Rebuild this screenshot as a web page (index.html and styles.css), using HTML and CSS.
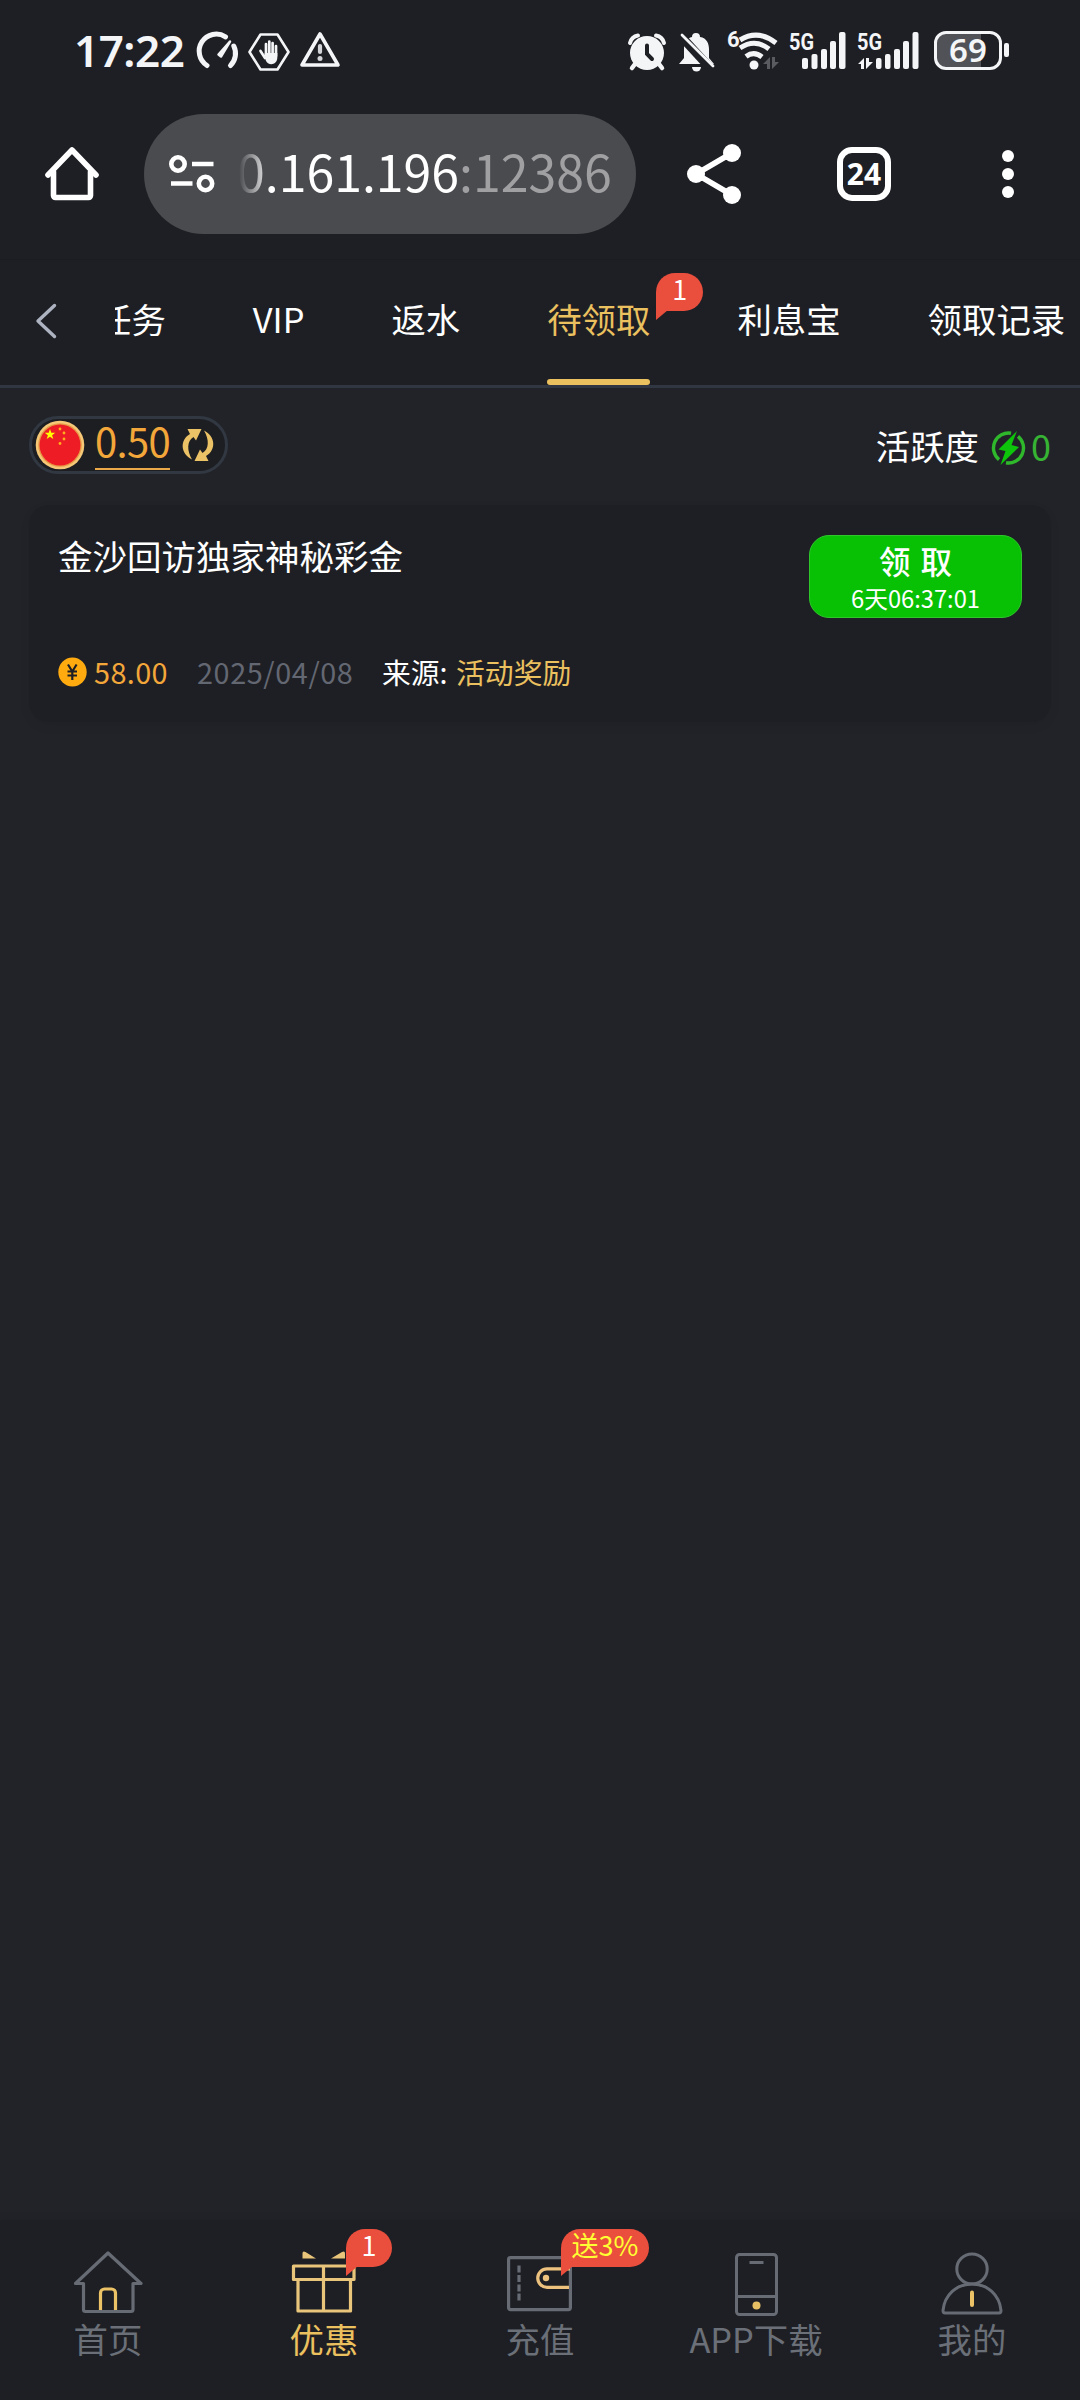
FILE: index.html
```html
<!DOCTYPE html>
<html lang="zh-CN">
<head>
<meta charset="utf-8">
<title>待领取</title>
<link rel="stylesheet" href="styles.css">
</head>
<body>
<div class="screen">
  <div class="status">
    <span class="clock">17:22</span>
    <svg class="s-gauge" width="40" height="36" viewBox="0 0 40 36" fill="none" stroke="#f4f5f7" stroke-width="5" stroke-linecap="round"><path d="M8 32.500A17 17 0 0 1 26.500 3.800M34.800 13A17 17 0 0 1 31.500 32.500"/><path d="M19.500 21.500L31 8.500L22 23.500Z" fill="#f4f5f7" stroke-width="2.500" stroke-linejoin="round"/></svg>
    <svg class="s-hex" width="42" height="38" viewBox="0 0 42 38"><path d="M12.500 1.500h17L40.500 19l-11 17.500h-17L1.500 19z" fill="none" stroke="#f4f5f7" stroke-width="2.600" stroke-linejoin="round"/><path d="M12.500 18L17 25M18 22V11M21.300 22V8.500M24.600 22V10M28 23V13" fill="none" stroke="#f4f5f7" stroke-width="2.700" stroke-linecap="round"/><path d="M16.600 20h12.700v4.500c0 8-9.500 8.500-11.500 3z" fill="#f4f5f7"/></svg>
    <svg class="s-warn" width="42" height="38" viewBox="0 0 42 38"><path d="M21 4L39 35H3Z" fill="none" stroke="#f4f5f7" stroke-width="3.600" stroke-linejoin="round"/><path d="M21 16v6" stroke="#d4d5d8" stroke-width="4.200" stroke-linecap="round"/><circle cx="21" cy="28.500" r="2.500" fill="#d4d5d8"/></svg>
    <svg class="s-alarm" width="38" height="38" viewBox="0 0 38 38"><path d="M2 10A10 10 0 0 1 10 2.500M28 2.500A10 10 0 0 1 36 10" fill="none" stroke="#f4f5f7" stroke-width="4" stroke-linecap="round"/><circle cx="19" cy="20" r="17" fill="#f4f5f7"/><path d="M7 31l-3 4M31 31l3 4" stroke="#f4f5f7" stroke-width="4.500" stroke-linecap="round"/><path d="M19 12.500v8.500l5 5" fill="none" stroke="#1e1f24" stroke-width="4" stroke-linecap="round"/></svg>
    <svg class="s-bell" width="38" height="42" viewBox="0 0 38 42"><path d="M14 6q0-4 4-4t4 4c7 1 9 7 9 12v9l5 6H1l5-6V17c0-5 3-10 8-11z" fill="#f4f5f7"/><path d="M14 36h9a4.500 4.500 0 0 1-9 0z" fill="#f4f5f7"/><path d="M0 2L33 38" stroke="#1e1f24" stroke-width="9"/><path d="M4 4L35 35" stroke="#f4f5f7" stroke-width="2.800" stroke-linecap="round"/></svg>
    <svg class="s-wifi" width="54" height="42" viewBox="0 0 54 42"><text class="net" x="0" y="17" font-size="22" textLength="11">6</text><g fill="none" stroke="#f4f5f7" stroke-width="5" stroke-linecap="butt"><path d="M13 10Q31-1 49 13"/><path d="M13 18Q28 8 42 19"/><path d="M19 26.500Q27 20.500 35 27"/></g><circle cx="27" cy="35" r="4.500" fill="#f4f5f7"/><path d="M43 39V27l-7 7h4v5zM45 27v12l7-7h-4v-5z" fill="#5a5b60"/></svg>
    <svg class="s-sig1" width="58" height="40" viewBox="0 0 58 40"><text class="net" x="0" y="20" font-size="24" textLength="25" lengthAdjust="spacingAndGlyphs">5G</text><g fill="#f4f5f7"><rect x="13" y="28" width="6" height="11" rx="2"/><rect x="22.500" y="24" width="6" height="15" rx="2"/><rect x="32" y="19" width="6" height="20" rx="2"/><rect x="41" y="11" width="6" height="28" rx="2"/><rect x="50" y="2" width="6.500" height="37" rx="2"/></g></svg>
    <svg class="s-sig2" width="64" height="40" viewBox="0 0 64 40"><text class="net" x="0" y="20" font-size="24" textLength="25" lengthAdjust="spacingAndGlyphs">5G</text><g fill="#f4f5f7"><path d="M7 39V28l-6 6h3v5zM9 28v11l7-7h-4v-4z"/><rect x="19" y="28" width="5.500" height="11" rx="2"/><rect x="28" y="24" width="5.500" height="15" rx="2"/><rect x="37" y="19" width="6" height="20" rx="2"/><rect x="46" y="11" width="6" height="28" rx="2"/><rect x="55.500" y="2" width="6" height="37" rx="2"/></g></svg>
    <div class="battery"><span class="battery-num">69</span></div><i class="battery-nub"></i>
  </div>

  <div class="toolbar">
    <svg class="t-home" width="56" height="56" viewBox="0 0 56 56" fill="none" stroke="#fff" stroke-width="5.600" stroke-linejoin="round" stroke-linecap="round"><path d="M4 29L28 4L52 29"/><path d="M9.500 26V49.500a2 2 0 0 0 2 2H44.500a2 2 0 0 0 2-2V26"/></svg>
    <div class="address">
      <svg class="t-tune" width="46" height="40" viewBox="0 0 46 40" fill="none" stroke="#fff" stroke-width="4.600"><circle cx="9" cy="10" r="6.700"/><path d="M23 10h21.500M2 29.500h21.500"/><circle cx="36.500" cy="29.500" r="6.700"/></svg>
      <span class="url">0.161.196<span class="port">:12386</span></span>
    </div>
    <svg class="t-share" width="56" height="60" viewBox="0 0 56 60"><path d="M46 9L10 30L46 51" fill="none" stroke="#fff" stroke-width="5.500"/><g fill="#fff"><circle cx="10" cy="30" r="9"/><circle cx="46" cy="9" r="9"/><circle cx="46" cy="51" r="9"/></g></svg>
    <div class="tab-count">24</div>
    <svg class="t-more" width="12" height="48" viewBox="0 0 12 48" fill="#fff"><circle cx="6" cy="6" r="6"/><circle cx="6" cy="24" r="6"/><circle cx="6" cy="42" r="6"/></svg>
  </div>

  <div class="tabs">
    <svg class="back" width="24" height="38" viewBox="0 0 24 38"><path d="M20.500 3.500L4 19L20.500 34.500" fill="none" stroke="#adb3c1" stroke-width="3.400" stroke-linecap="round" stroke-linejoin="round"/></svg>
    <div class="tab-scroll">
      <span class="tab">任务</span>
      <span class="tab">VIP</span>
      <span class="tab">返水</span>
      <span class="tab active">待领取<b class="badge tab-badge">1</b></span>
      <span class="tab">利息宝</span>
      <span class="tab">领取记录</span>
    </div>
  </div>

  <div class="summary">
    <div class="balance">
      <svg width="50" height="50" viewBox="0 0 50 50"><circle cx="25" cy="25" r="24.300" fill="#f6c978"/><circle cx="25" cy="25" r="21.800" fill="#e79a45"/><circle cx="25" cy="25" r="20.500" fill="#ee1c25"/><path d="M15 9l1.300 3.800h4l-3.200 2.400 1.200 3.800-3.300-2.300-3.300 2.300 1.200-3.800-3.200-2.400h4z" fill="#ff0"/><g fill="#ffb01c"><circle cx="25" cy="9" r="1.400"/><circle cx="29" cy="13" r="1.400"/><circle cx="29" cy="19" r="1.400"/><circle cx="25" cy="23.500" r="1.400"/></g></svg>
      <span class="amount">0.50</span>
      <svg class="refresh" width="32" height="34" viewBox="0 0 32 34" fill="#ecc266"><path d="M5.500 1H19.500L14 12.500L11.500 9C5 13 4.500 22 10 31.500C-1.500 26-2.500 12 8 6Z"/><path d="M26.500 33H12.500L18 21.500L20.500 25C27 21 27.500 12 22 2.500C33.500 8 34.500 22 24 28Z"/></svg>
    </div>
    <div class="activity">
      <span>活跃度</span>
      <svg width="36" height="38" viewBox="0 0 36 38"><path d="M20 4.200A15 15 0 0 0 8 30.600M27 7.400A15 15 0 0 1 15 33.800" fill="none" stroke="#2fb82c" stroke-width="3.400"/><path d="M26 2L7.500 20.500L14.500 22L9.500 36L28 18L20.500 16Z" fill="#0dc50b"/></svg>
      <span class="activity-num">0</span>
    </div>
  </div>

  <div class="card">
    <div class="card-top">
      <span class="card-title">金沙回访独家神秘彩金</span>
      <div class="claim"><span class="claim-label">领 取</span><span class="claim-time">6天06:37:01</span></div>
    </div>
    <div class="card-meta">
      <svg width="29" height="32" viewBox="0 0 29 32"><ellipse cx="14.500" cy="16" rx="14.200" ry="14.500" fill="#ffab10"/><path d="M10 8.500L14.300 15.500L18.600 8.500M14.300 15V24M9.500 15.500H19M9.500 19.500H19" fill="none" stroke="#1e1f24" stroke-width="2.200"/></svg>
      <span class="prize">58.00</span>
      <span class="date">2025/04/08</span>
      <span class="source">来源: <em>活动奖励</em></span>
    </div>
  </div>

  <div class="nav">
    <div class="nav-item">
      <svg width="72" height="68" viewBox="0 0 72 68" fill="none" stroke-width="3.200" stroke-linejoin="round"><path d="M36 5L69 35.500H61V61.500a2 2 0 0 1-2 2H13.500a2 2 0 0 1-2-2V35.500H3.500Z" stroke="#666b74"/><path d="M28.500 62V45a4 4 0 0 1 4-4H39.500a4 4 0 0 1 4 4V62" stroke="#ecc266"/></svg>
      <span>首页</span>
    </div>
    <div class="nav-item on">
      <svg width="72" height="68" viewBox="0 0 72 68" fill="none" stroke="#e9c57b" stroke-width="3.200" stroke-linejoin="round"><path d="M5.500 18H66V31.500H5.500ZM10 31.500V63H62.500V31.500M35.500 18V63"/><path d="M14.500 10V5.500q0-3 3-1.500L28 10.500H14.500ZM57 10V5.500q0-3-3-1.500L43 10.500H57Z" fill="#e9c57b" stroke="none"/></svg>
      <b class="badge gift-badge">1</b>
      <span>优惠</span>
    </div>
    <div class="nav-item">
      <svg width="72" height="68" viewBox="0 0 72 68" fill="none" stroke-width="3.200"><rect x="4.600" y="9.600" width="61.800" height="52" rx="2" stroke="#666b74"/><path d="M15 17.500v7M15 27v7M15 36.500v7M15 45.500v7" stroke="#666b74"/><path d="M66 20.800H43A9.200 9.200 0 0 0 43 39.300H65" stroke="#ecc27e"/><circle cx="42" cy="30" r="3.200" fill="#ecc27e"/></svg>
      <b class="badge rate-badge">送3%</b>
      <span>充值</span>
    </div>
    <div class="nav-item">
      <svg width="72" height="68" viewBox="0 0 72 68" fill="none" stroke="#666b74" stroke-width="3"><rect x="16.500" y="6.500" width="40" height="60" rx="3"/><path d="M16.500 48.500H56.500M29.500 14.500H43.500"/><circle cx="36.500" cy="57.500" r="4" fill="#e6c063" stroke="none"/></svg>
      <span>APP下载</span>
    </div>
    <div class="nav-item">
      <svg width="72" height="68" viewBox="0 0 72 68" fill="none" stroke="#666b74" stroke-width="3"><ellipse cx="36" cy="21" rx="15.200" ry="15"/><path d="M36 36C51.500 36 63.500 47 65 62.500q0 2.500-2 2.500H9q-2 0-2-2.500C8.500 47 20.500 36 36 36Z"/><path d="M36 44.500V57" stroke="#ecc266" stroke-width="4" stroke-linecap="round"/></svg>
      <span>我的</span>
    </div>
  </div>
</div>
</body>
</html>
```
FILE: styles.css
```css
* { box-sizing: border-box; }
body { margin: 0; background: #222328; }
.screen {
  width: 1080px; height: 2400px; overflow: hidden;
  display: flex; flex-direction: column;
  font-family: "Noto Sans CJK SC", "Noto Sans", sans-serif;
  color: #fff; background: #222328;
}
svg { display: block; flex: none; overflow: visible; }

.status { height: 100px; background: #1e1f24; display: flex; align-items: flex-start; padding: 30px 0 0 74px; flex: none; }
.clock { font: 600 44px/41px "Noto Sans", sans-serif; width: 114px; color: #f4f5f7; letter-spacing: -.500px; flex: none; }
.s-gauge { margin: 3px 0 0 11px; }
.s-hex { margin: 3px 0 0 9px; }
.s-warn { margin: 0 0 0 9px; }
.s-alarm { margin: 3px 0 0 287px; }
.s-bell { margin: 1px 0 0 12px; }
.s-wifi { margin: 0 0 0 11px; }
.s-sig1 { margin: 0 0 0 8px; }
.s-sig2 { margin: 0 0 0 10px; }
.net { font-family: Roboto, sans-serif; font-weight: 700; fill: #f4f5f7; }
.battery { width: 68px; height: 39px; margin: 1px 2px 0 13px; border: 3px solid #f4f5f7; border-radius: 12px; background: linear-gradient(90deg, #515257 44px, #1e1f24 44px); text-align: center; flex: none; }
.battery-num { display: block; font: 600 33px/32px "Noto Sans", sans-serif; color: #f4f5f7; }
.battery-nub { width: 5px; height: 14px; margin-top: 13px; background: #f4f5f7; border-radius: 2px; }

.toolbar { height: 159px; background: #1e1f24; display: flex; align-items: center; padding: 0 66px 11px 44px; flex: none; }
.address { width: 492px; height: 120px; margin-left: 44px; border-radius: 60px; background: #4a4b4f; display: flex; align-items: center; padding-left: 25px; }
.url { margin: -9px 0 0 22px; width: 376px; font-size: 50px; line-height: 60px; white-space: nowrap;
  -webkit-mask-image: linear-gradient(90deg, transparent 2px, #000 34px); mask-image: linear-gradient(90deg, transparent 2px, #000 34px); }
.port { color: #a0a0a3; }
.t-share { margin-left: 50px; }
.tab-count { width: 54px; height: 54px; margin-left: 95px; border: 6px solid #fff; border-radius: 15px; text-align: center; font: 700 30px/42px "Noto Sans", sans-serif; }
.t-more { margin-left: auto; }

.tabs { height: 129px; background: #1e1f24; border-bottom: 3px solid #313742; display: flex; flex: none; border-top: 1px solid #1b1c20; }
.back { margin: 42px 0 0 34px; }
.tab-scroll { margin-left: 57px; flex: 1; min-width: 0; overflow: hidden; display: flex; gap: 87px; }
.tab { position: relative; flex: none; height: 125px; font-size: 34.400px; line-height: 116px; white-space: nowrap; }
.tab:first-child { margin-left: -18px; }
.tab.active { color: #ebc05f; }
.tab.active::after { content: ""; position: absolute; left: 0; right: 0; bottom: 0; height: 6px; border-radius: 3px; background: #ebc05f; }
.badge { position: absolute; height: 38px; padding: 0 15px; border-radius: 19px 19px 19px 0; background: #ea4e3d; color: #fff; font-weight: 400; font-size: 27px; line-height: 31px; text-align: center; }
.badge::after { content: ""; position: absolute; left: 0; top: 37px; border-top: 10px solid #ea4e3d; border-right: 12px solid transparent; }
.tab-badge { left: 109px; top: 13px; width: 47px; }

.summary { display: flex; justify-content: space-between; padding: 28px 29px 0; height: 117px; flex: none; }
.balance { width: 199px; height: 58px; border: 3px solid #313842; border-radius: 29px; background: #1d1e22; display: flex; align-items: center; padding-left: 3px; }
.amount { margin: 1px 0 0 10px; width: 75px; height: 49px; border-bottom: 2px solid #eba949; color: #f3a73a; font-size: 40px; line-height: 38px; letter-spacing: -.700px; white-space: nowrap; }
.refresh { margin-left: 12px; }
.activity { height: 59px; display: flex; align-items: center; font-size: 34.400px; line-height: 59px; }
.activity svg { margin: 5px 4px 0 12px; }
.activity-num { color: #37b334; font-size: 36px; line-height: 59px; }

.card { margin: 0 29px; height: 217px; padding: 30px 29px 0; border-radius: 20px; background: #1e1f24; box-shadow: 0 4px 12px rgba(0,0,0,.06); flex: none; }
.card-top { display: flex; justify-content: space-between; }
.card-title { font-size: 34.500px; line-height: 40px; }
.claim { width: 213px; height: 83px; border-radius: 20px; border: 1px solid #2fc62c; background: #08c105; display: flex; flex-direction: column; align-items: center; padding-top: 6px; }
.claim-label { font-size: 31.500px; line-height: 36px; font-weight: 500; word-spacing: 3px; }
.claim-time { font-size: 23.700px; line-height: 41px; }
.card-meta { margin-top: 34px; height: 40px; display: flex; align-items: center; font-size: 28.800px; line-height: 40px; white-space: nowrap; }
.prize { margin-left: 7px; width: 103px; color: #f3a73a; letter-spacing: .400px; }
.date { width: 185px; color: #636772; letter-spacing: .600px; }
.source em { margin-left: 2px; font-style: normal; color: #ebc05f; }

.nav { margin-top: auto; height: 180px; background: #1e1f24; display: grid; grid-template-columns: repeat(5, 1fr); box-shadow: 0 -2px 8px rgba(0,0,0,.06); flex: none; }
.nav-item { position: relative; display: flex; flex-direction: column; align-items: center; padding-top: 28px; color: #6a6f78; font-size: 34.400px; line-height: 44px; }
.nav-item.on { color: #ebc05f; }
.gift-badge { left: 130px; top: 9px; width: 46px; }
.rate-badge { left: 129px; top: 9px; width: 88px; padding: 0; color: #ff3; }
```
